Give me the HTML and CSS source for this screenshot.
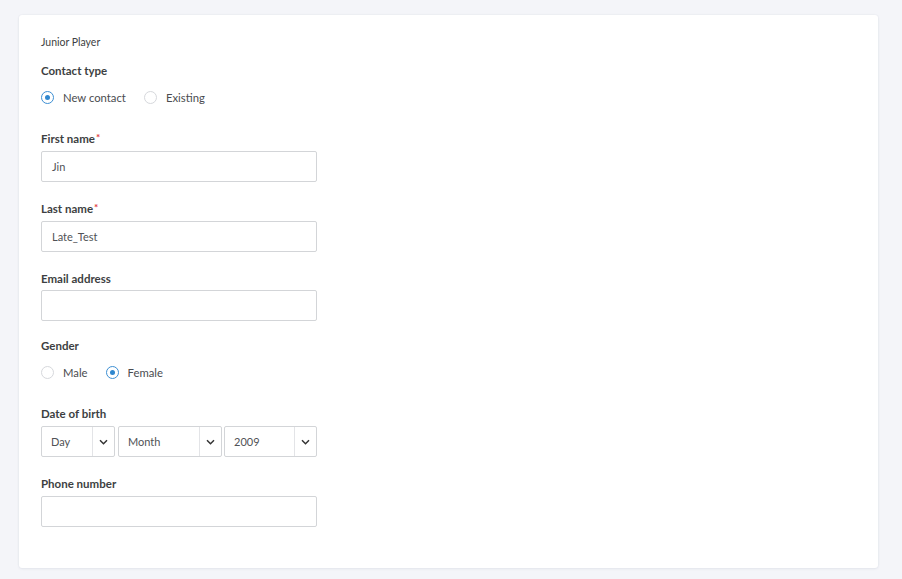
FILE: index.html
```html
<!DOCTYPE html>
<html>
<head>
<meta charset="utf-8">
<link rel="stylesheet" href="styles.css">
</head>
<body>
<div class="card">
  <div class="title">Junior Player</div>
  <div class="field first">
    <div class="label">Contact type</div>
    <div class="radios">
      <span class="radio checked"></span><span class="rlabel">New contact</span>
      <span class="radio"></span><span class="rlabel">Existing</span>
    </div>
  </div>
  <div class="field after-radio">
    <div class="label">First name<span class="req">*</span></div>
    <div class="input">Jin</div>
  </div>
  <div class="field">
    <div class="label">Last name<span class="req">*</span></div>
    <div class="input">Late_Test</div>
  </div>
  <div class="field">
    <div class="label">Email address</div>
    <div class="input"></div>
  </div>
  <div class="field tight">
    <div class="label">Gender</div>
    <div class="radios">
      <span class="radio"></span><span class="rlabel">Male</span>
      <span class="radio checked"></span><span class="rlabel">Female</span>
    </div>
  </div>
  <div class="field after-radio">
    <div class="label wide">Date of birth</div>
    <div class="dob">
      <div class="select day"><span class="sval">Day</span><span class="chev"><svg width="9" height="6" viewBox="0 0 9 6"><path d="M1 1.2l3.5 3.5 3.5-3.5" fill="none" stroke="#333" stroke-width="1.5"/></svg></span></div>
      <div class="select month"><span class="sval">Month</span><span class="chev"><svg width="9" height="6" viewBox="0 0 9 6"><path d="M1 1.2l3.5 3.5 3.5-3.5" fill="none" stroke="#333" stroke-width="1.5"/></svg></span></div>
      <div class="select year"><span class="sval">2009</span><span class="chev"><svg width="9" height="6" viewBox="0 0 9 6"><path d="M1 1.2l3.5 3.5 3.5-3.5" fill="none" stroke="#333" stroke-width="1.5"/></svg></span></div>
    </div>
  </div>
  <div class="field">
    <div class="label wide">Phone number</div>
    <div class="input"></div>
  </div>
</div>
</body>
</html>
```
FILE: styles.css
```css
html, body { margin: 0; padding: 0; }
body {
  background: #f4f5f9;
  font-family: Lato, "Open Sans", sans-serif;
  color: #3d3f42;
  width: 902px;
  height: 579px;
  overflow: hidden;
}
.card {
  margin: 15px 0 0 19px;
  width: 859px;
  height: 553px;
  box-sizing: border-box;
  background: #fff;
  border-radius: 3px;
  box-shadow: 0 0 2px rgba(40, 50, 80, 0.08), 0 1px 3px rgba(40, 50, 80, 0.06);
  padding: 20px 22px 0 22px;
}
.title {
  font-size: 10.5px;
  line-height: 14px;
  color: #3d3f42;
}
.field { margin-top: 19px; }
.field.tight { margin-top: 17px; }
.field.first { margin-top: 14px; }
.field.after-radio { margin-top: 25px; }
.label {
  font-size: 11.5px;
  font-weight: 700;
  line-height: 15px;
  color: #3d3f42;
  margin-bottom: 4px;
}
.label.wide { margin-bottom: 5px; }
.req { color: #e0393e; font-size: 10px; position: relative; top: -2px; margin-left: 1px; }
.radios {
  display: flex;
  align-items: center;
  height: 18px;
  margin-top: 10px;
}
.radio {
  width: 11px;
  height: 11px;
  border: 1px solid #d6d8dc;
  border-radius: 50%;
  box-sizing: content-box;
  position: relative;
  margin-right: 9px;
}
.radio.checked { border-color: #3d8fd3; }
.radio.checked::after {
  content: "";
  position: absolute;
  left: 3px; top: 3px;
  width: 5px; height: 5px;
  border-radius: 50%;
  background: #2f87cf;
}
.rlabel {
  font-size: 11.3px;
  color: #4a4c50;
  margin-right: 18px;
}
.input {
  width: 276px;
  height: 31px;
  box-sizing: border-box;
  border: 1px solid #d3d5d8;
  border-radius: 2px;
  padding: 0 10px;
  font-size: 11px;
  line-height: 29px;
  color: #505256;
}
.dob { display: flex; gap: 2px; }
.select {
  display: flex;
  height: 31px;
  box-sizing: border-box;
  border: 1px solid #d3d5d8;
  border-radius: 2px;
  font-size: 11px;
  color: #505256;
}
.select.day { width: 74px; margin-right: 1px; }
.select.month { width: 104px; }
.select.year { width: 93px; }
.sval { flex: 1; padding-left: 9px; line-height: 29px; }
.chev {
  width: 21px;
  border-left: 1px solid #e3e4e7;
  display: flex;
  align-items: center;
  justify-content: center;
}
.chev svg { display: block; }
```
